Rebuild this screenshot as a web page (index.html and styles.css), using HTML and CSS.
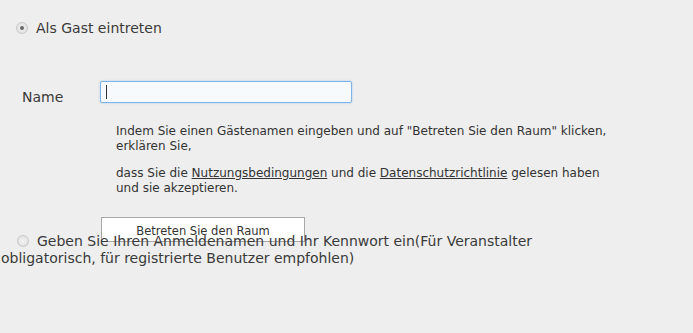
FILE: index.html
```html
<!DOCTYPE html>
<html lang="de">
<head>
  <meta charset="UTF-8" />
  <title>Raum betreten</title>
  <link rel="stylesheet" href="styles.css">
</head>
<body>
  <div class="login">
    <label class="choice first"><span class="radio checked"></span>Als Gast eintreten</label>

    <div class="guest">
      <div class="field-row">
        <label class="field-label" for="guestName">Name</label>
        <div class="field-box"><span class="caret"></span></div>
      </div>
      <div class="terms">
        <p>Indem Sie einen Gästenamen eingeben und auf "Betreten Sie den Raum" klicken,<br>erklären Sie,</p>
        <p>dass Sie die <a href="#">Nutzungsbedingungen</a> und die <a href="#">Datenschutzrichtlinie</a> gelesen haben<br>und sie akzeptieren.</p>
      </div>
      <button class="enter">Betreten Sie den Raum</button>
    </div>

    <label class="choice second"><span class="radio"></span>Geben Sie Ihren Anmeldenamen und Ihr Kennwort ein(Für Veranstalter obligatorisch, für registrierte Benutzer empfohlen)</label>
  </div>
</body>
</html>
```
FILE: styles.css
```css
body {
  margin: 0;
  background: #eeeeee;
  font-family: "DejaVu Sans", Verdana, sans-serif;
  color: #333;
}
.login {
  padding-top: 20px;
}
.choice {
  display: block;
  font-size: 14px;
  line-height: 17px;
  color: #3a3a3a;
}
.choice.second {
  position: relative;
  margin-top: -9px;
  padding-left: 1px;
  width: 600px;
}
.radio {
  display: inline-block;
  width: 12px;
  height: 12px;
  border-radius: 50%;
  border: 1px solid #c8c8c8;
  background: radial-gradient(circle, #f4f4f4, #dcdcdc);
  box-sizing: border-box;
  vertical-align: -1px;
  margin: 0 8px 0 16px;
  position: relative;
}
.radio.checked::after {
  content: "";
  position: absolute;
  left: 3px;
  top: 3px;
  width: 4px;
  height: 4px;
  border-radius: 50%;
  background: #6a6a6a;
}
.guest {
  padding-top: 44px;
}
.field-row {
  display: flex;
  align-items: flex-start;
}
.field-label {
  width: 78px;
  padding: 8px 0 0 22px;
  font-size: 14px;
  line-height: 17px;
  color: #3a3a3a;
}
.field-box {
  width: 245px;
  height: 20px;
  border: 1px solid #7eb4ea;
  border-radius: 2px;
  background: #f7fafd;
  box-shadow: 0 0 2px #9cc6f0;
  display: flex;
  align-items: center;
  padding-left: 5px;
}
.caret {
  width: 1px;
  height: 14px;
  background: #333;
}
.terms {
  margin-left: 116px;
  margin-top: 18px;
  font-size: 12px;
  line-height: 15px;
}
.terms p {
  margin: 0 0 12px;
}
.terms a {
  color: #333;
  text-decoration: underline;
}
.enter {
  display: block;
  margin-left: 101px;
  margin-top: 21px;
  width: 204px;
  height: 25px;
  background: #fff;
  border: 1px solid #a8a8a8;
  font-family: "DejaVu Sans", Verdana, sans-serif;
  font-size: 11.5px;
  color: #333;
  padding: 2px 0 0;
}
```
